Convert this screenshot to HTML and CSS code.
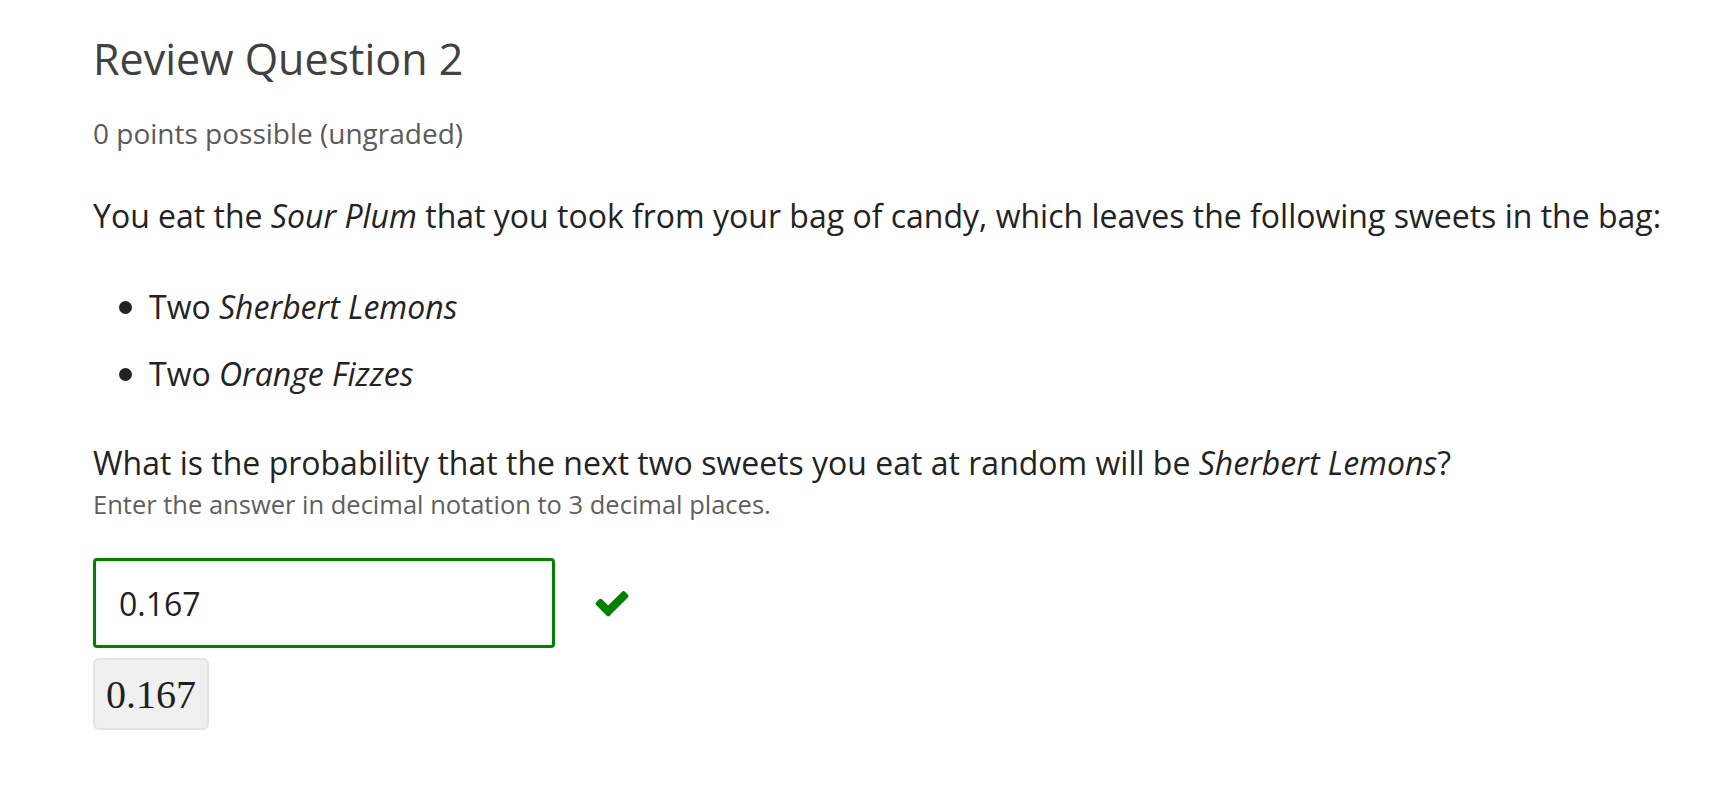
FILE: index.html
```html
<!DOCTYPE html>
<html lang="en">
<head>
<meta charset="utf-8">
<title>Review Question 2</title>
<link rel="stylesheet" href="styles.css">
</head>
<body>
<main class="problem">
  <h2 class="problem-title">Review Question 2</h2>
  <div class="problem-progress">0 points possible (ungraded)</div>
  <p class="prompt">You eat the <em>Sour Plum</em> that you took from your bag of candy, which leaves the following sweets in the bag:</p>
  <ul class="sweets">
    <li>Two <em>Sherbert Lemons</em></li>
    <li>Two <em>Orange Fizzes</em></li>
  </ul>
  <p class="question">What is the probability that the next two sweets you eat at random will be <em>Sherbert Lemons</em>?</p>
  <div class="hint">Enter the answer in decimal notation to 3 decimal places.</div>
  <div class="answer-row">
    <input class="answer-input" type="text" value="0.167" aria-label="answer">
    <span class="status-icon" aria-label="correct">
      <svg viewBox="0 0 1792 1792" width="38" height="38"><path fill="#008100" d="M1671 566q0 40-28 68l-724 724-136 136q-28 28-68 28t-68-28l-136-136-362-362q-28-28-28-68t28-68l136-136q28-28 68-28t68 28l294 295 656-657q28-28 68-28t68 28l136 136q28 28 28 68z"/></svg>
    </span>
  </div>
  <div class="preview">0.167</div>
</main>
</body>
</html>
```
FILE: styles.css
```css
html, body {
  margin: 0;
  padding: 0;
  background: #ffffff;
}

body {
  font-family: "Open Sans", "Noto Sans", sans-serif;
  color: #232323;
}

.problem {
  padding: 35px 0 0 93px;
  display: flex;
  flex-direction: column;
  align-items: flex-start;
}

.problem-title {
  margin: 0;
  font-size: 43px;
  line-height: 48px;
  font-weight: 400;
  color: #414141;
}

.problem-progress {
  margin-top: 30px;
  font-size: 28px;
  line-height: 40px;
  color: #5b5b5b;
}

.prompt {
  margin: 40px 0 0;
  font-size: 32px;
  line-height: 45px;
}

.sweets {
  margin: 46px 0 0;
  padding-left: 26px;
  list-style: none;
  font-size: 32px;
  line-height: 45px;
}

.sweets li::before {
  content: "";
  display: inline-block;
  width: 13px;
  height: 13px;
  margin-right: 17px;
  border-radius: 50%;
  background: #232323;
  vertical-align: 5px;
}

.sweets li + li {
  margin-top: 22px;
}

.question {
  margin: 44px 0 0;
  font-size: 32px;
  line-height: 45px;
}

.hint {
  margin-top: 3px;
  font-size: 25.5px;
  line-height: 32px;
  color: #5f5f5f;
}

.answer-row {
  margin-top: 38px;
  display: flex;
  align-items: center;
  gap: 38px;
}

.answer-input {
  box-sizing: border-box;
  width: 462px;
  height: 90px;
  margin: 0;
  padding: 0 0 0 23px;
  border: 3px solid #008100;
  border-radius: 4px;
  box-shadow: inset 0 0 4px rgba(0, 0, 0, 0.08);
  font-family: "Open Sans", "Noto Sans", sans-serif;
  font-size: 32px;
  color: #1f1f1f;
  background: #ffffff;
  outline: none;
}

.status-icon {
  display: flex;
  width: 38px;
  height: 38px;
}

.preview {
  margin-top: 10px;
  box-sizing: border-box;
  height: 72px;
  padding: 0 11px;
  display: flex;
  align-items: center;
  background: #f0f0f0;
  border: 2px solid #e3e3e3;
  border-radius: 6px;
  font-family: "Liberation Serif", "DejaVu Serif", serif;
  font-size: 40px;
  color: #1f1f1f;
}
```
